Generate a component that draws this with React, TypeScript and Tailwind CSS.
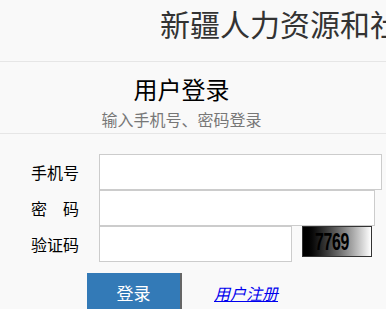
export default function App() {
  return (
    <div className="w-[386px] h-[309px] overflow-hidden bg-[#f9f9f9] font-['Noto_Sans_CJK_SC',sans-serif]">
      <div className="h-[62px] border-b border-[#e6e6e6] pl-[160px] pt-[7px] whitespace-nowrap">
        <h1 className="text-[30px] leading-[32px] text-[#333]">新疆人力资源和社会保障厅</h1>
      </div>
      <div className="h-[72px] border-b border-[#e6e6e6]">
        <div className="w-[363px] flex flex-col items-center">
          <h2 className="text-[24px] leading-[28px] mt-[13px] text-black">用户登录</h2>
          <p className="text-[16px] leading-[20px] mt-[6px] text-[#777]">输入手机号、密码登录</p>
        </div>
      </div>
      <div className="pt-[20px]">
        <div className="flex items-center h-[36px]">
          <label className="w-[99px] shrink-0 pl-[31px] text-[16px] text-black">手机号</label>
          <input className="w-[283px] h-[36px] bg-white border border-[#ccc] outline-none" />
        </div>
        <div className="flex items-center h-[36px]">
          <label className="w-[99px] shrink-0 pl-[31px] text-[16px] text-black">
            <span className="flex justify-between w-[48px]">
              <span>密</span>
              <span>码</span>
            </span>
          </label>
          <input type="password" className="w-[276px] h-[36px] bg-white border border-[#ccc] outline-none" />
        </div>
        <div className="flex items-center h-[36px]">
          <label className="w-[99px] shrink-0 pl-[31px] text-[16px] text-black">验证码</label>
          <input className="w-[193px] h-[36px] bg-white border border-[#ccc] outline-none" />
          <div className="ml-[10px] w-[70px] h-[31px] shrink-0 border border-[#333] bg-gradient-to-r from-black to-white flex items-center -mt-[5px] overflow-hidden">
            <span className="inline-block origin-left ml-[12px] scale-x-[0.66] font-['Liberation_Sans',sans-serif] font-bold text-[24px] leading-none tracking-[-0.5px] text-black">7769</span>
          </div>
        </div>
        <div className="flex items-center mt-[11px] pl-[87px]">
          <button className="w-[95px] h-[40px] shrink-0 bg-[#337ab7] text-white text-[17px] border-r-2 border-[#666]">登录</button>
          <a href="#" className="ml-[32px] text-[16px] italic underline text-[#0000ee]">用户注册</a>
        </div>
      </div>
    </div>
  );
}
